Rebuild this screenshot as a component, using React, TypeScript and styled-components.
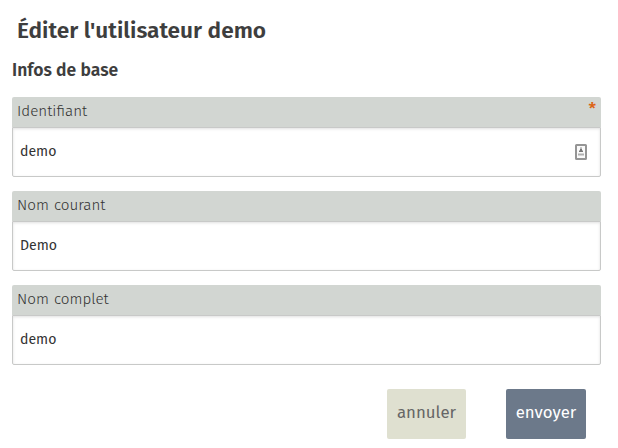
import React from 'react';
import styled, { createGlobalStyle } from 'styled-components';

const GlobalStyle = createGlobalStyle`
  * { box-sizing: border-box; }
  body {
    margin: 0;
    background: #fff;
    color: #3e3e3e;
    font-family: "Fira Sans", "Noto Sans", sans-serif;
  }
`;

const Page = styled.main`
  width: 618px;
  height: 448px;
  padding: 14px 17px 0 12px;
  overflow: hidden;
`;

const Title = styled.h1`
  margin: 0;
  padding-left: 5px;
  font-size: 22.65px;
  line-height: 34px;
  font-weight: 600;
`;

const SectionTitle = styled.h2`
  margin: 6px 0 12px;
  font-size: 17.5px;
  line-height: 33px;
  height: 31px;
  font-weight: 600;
`;

const Form = styled.form`
  display: flex;
  flex-direction: column;
  gap: 14px;
`;

const Field = styled.div`
  display: flex;
  flex-direction: column;
  height: 80px;
`;

const Label = styled.label`
  display: flex;
  justify-content: space-between;
  flex: 0 0 30px;
  padding: 0 5px;
  border-radius: 2px 2px 0 0;
  background: #d2d6d2;
  color: #333;
  font-size: 15.2px;
  line-height: 29px;
  font-weight: 300;
  word-spacing: 0.8px;
`;

const Required = styled.span`
  color: #dc6414;
  font-size: 17px;
  line-height: 24px;
  font-weight: 500;
`;

const Control = styled.div`
  display: flex;
  align-items: center;
  flex: 1;
  padding: 0 13px 0 7px;
  border: 1px solid #c8c9c8;
  border-radius: 0 0 2px 2px;
  background: #fff;
  box-shadow: inset 0 1px 3px rgba(0, 0, 0, 0.12);
`;

const Input = styled.input`
  flex: 1;
  min-width: 0;
  height: 46px;
  padding: 0 0 2px;
  border: 0;
  outline: 0;
  background: transparent;
  color: #333;
  font: 14.1px "Fira Sans", "Noto Sans", sans-serif;
`;

const Actions = styled.div`
  display: flex;
  justify-content: flex-end;
  gap: 40px;
  margin-top: 10px;
  padding-right: 15px;
`;

const Button = styled.button<{ $primary?: boolean }>`
  width: ${(p) => (p.$primary ? 80 : 79)}px;
  height: 50px;
  padding: 0 0 5px;
  border: 0;
  border-radius: 2px;
  background: ${(p) => (p.$primary ? '#6c798a' : '#dfe0d0')};
  color: ${(p) => (p.$primary ? '#fff' : '#666')};
  font: 16.8px "Fira Sans", "Noto Sans", sans-serif;
`;

const ContactIcon = () => (
  <svg width="12" height="16" viewBox="0 0 12 16" aria-hidden="true">
    <rect x="1" y="1" width="10" height="14" rx="0.5" fill="#fafafa" stroke="#959595" strokeWidth="2" />
    <path d="M6 3.3V5" stroke="#aaa" strokeWidth="1.6" />
    <path d="M5 5h2v1.500h1V8H4V6.500h1z" fill="#777" />
    <path d="M3 10.500h6" stroke="#b0b0b0" strokeWidth="2" />
  </svg>
);

const fields = [
  { id: 'login', label: 'Identifiant', value: 'demo', required: true },
  { id: 'nickname', label: 'Nom courant', value: 'Demo', required: false },
  { id: 'fullname', label: 'Nom complet', value: 'demo', required: false },
];

export default function App() {
  return (
    <>
      <GlobalStyle />
      <Page>
        <Title>Éditer l'utilisateur demo</Title>
        <SectionTitle>Infos de base</SectionTitle>
        <Form onSubmit={(e) => e.preventDefault()}>
          {fields.map((f) => (
            <Field key={f.id}>
              <Label htmlFor={f.id}>
                {f.label}
                {f.required && <Required>*</Required>}
              </Label>
              <Control>
                <Input id={f.id} defaultValue={f.value} spellCheck={false} />
                {f.required && <ContactIcon />}
              </Control>
            </Field>
          ))}
          <Actions>
            <Button type="button">annuler</Button>
            <Button type="submit" $primary>envoyer</Button>
          </Actions>
        </Form>
      </Page>
    </>
  );
}
